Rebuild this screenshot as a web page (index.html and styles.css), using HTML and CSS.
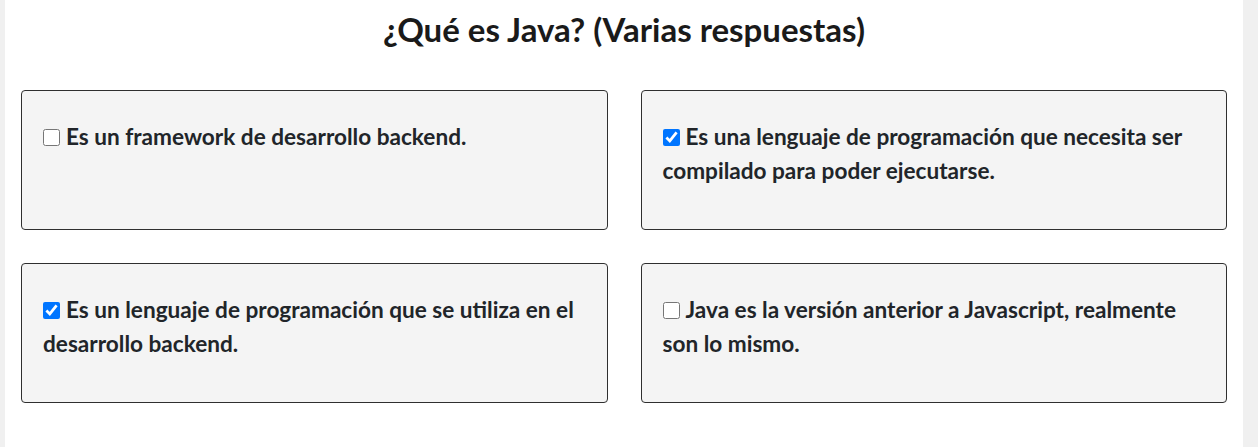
FILE: index.html
```html
<!DOCTYPE html>
<html lang="es">
<head>
<meta charset="utf-8">
<title>Quiz</title>
<link rel="stylesheet" href="styles.css">
</head>
<body>
<main class="page">
  <h1 class="title">¿Qué es Java? (Varias respuestas)</h1>
  <div class="options">
    <label class="card"><input type="checkbox" class="check">Es un framework de desarrollo backend.</label>
    <label class="card"><input type="checkbox" class="check" checked>Es una lenguaje de programación que necesita ser compilado para poder ejecutarse.</label>
    <label class="card"><input type="checkbox" class="check" checked>Es un lenguaje de programación que se utiliza en el desarrollo backend.</label>
    <label class="card"><input type="checkbox" class="check">Java es la versión anterior a Javascript, realmente son lo mismo.</label>
  </div>
</main>
</body>
</html>
```

FILE: styles.css
```css
html, body {
  margin: 0;
  padding: 0;
}
body {
  background: #f0f0f0;
  font-family: Lato, "Open Sans", sans-serif;
  height: 447px;
  overflow: hidden;
}
.page {
  margin-left: 5px;
  width: 1238px;
  height: 447px;
  background: #ffffff;
  padding: 0 16px;
  box-sizing: border-box;
}
.title {
  margin: 0;
  padding-top: 10px;
  height: 90px;
  box-sizing: border-box;
  text-align: center;
  font-size: 33px;
  font-weight: 700;
  line-height: 38px;
  color: #1a1a1a;
}
.options {
  display: grid;
  grid-template-columns: 1fr 1fr;
  column-gap: 33px;
  row-gap: 33px;
}
.card {
  display: block;
  height: 140px;
  box-sizing: border-box;
  background: #f4f4f4;
  border: 1px solid #2f2f2f;
  border-radius: 4px;
  padding: 29px 21px 0 21px;
  font-size: 22.6px;
  font-weight: 700;
  line-height: 34px;
  color: #212529;
}
.check {
  width: 17px;
  height: 17px;
  margin: 0 6px 0 0;
  vertical-align: -1px;
}
```
